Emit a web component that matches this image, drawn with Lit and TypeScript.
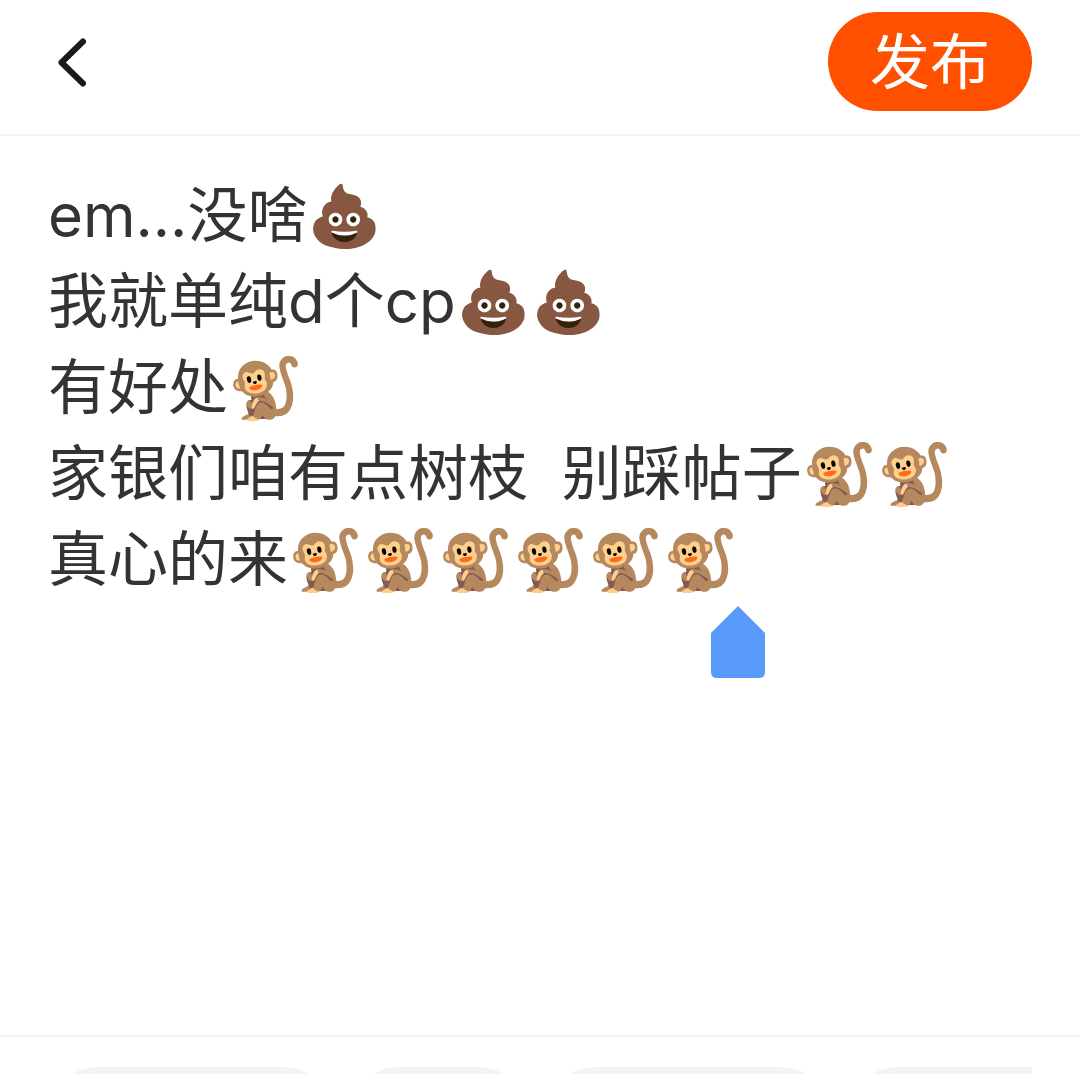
import { LitElement, html, css } from "lit";
import { customElement, state } from "lit/decorators.js";

@customElement("app-root")
export class AppRoot extends LitElement {
  static styles = css`
    :host {
      display: flex;
      flex-direction: column;
      height: 100vh;
      overflow: hidden;
      background: #fff;
      color: #333;
      font-family: Inter, "Noto Sans CJK SC", sans-serif;
    }
    .bar {
      display: flex;
      justify-content: space-between;
      align-items: center;
      padding: 12px 48px 23px;
      border-bottom: 2px solid #f3f3f3;
    }
    .back,
    .publish,
    .topic {
      border: 0;
      font: inherit;
      cursor: pointer;
    }
    .back {
      display: flex;
      padding: 0;
      background: none;
    }
    .publish {
      padding: 2px 42px 0;
      border-radius: 50px;
      background: #ff5000;
      color: #fff;
      font-size: 60px;
      line-height: 97px;
    }
    .body {
      position: relative;
      flex: 1;
      display: flex;
      min-height: 0;
    }
    .editor {
      flex: 1;
      box-sizing: border-box;
      padding: 36px 48px;
      border: 0;
      outline: 0;
      resize: none;
      background: none;
      color: inherit;
      font: inherit;
      font-size: 60px;
      line-height: 86px;
    }
    .handle {
      position: absolute;
      left: 711px;
      top: 470px;
    }
    .topics {
      height: 37px;
      padding: 0 48px;
      border-top: 2px solid #f5f5f5;
    }
    .strip {
      display: flex;
      gap: 18px;
      box-sizing: border-box;
      height: 100%;
      padding-top: 30px;
      overflow: hidden;
    }
    .topic {
      flex: none;
      width: 284px;
      height: 99px;
      padding: 0;
      border-radius: 50px;
      background: #f4f4f4;
    }
    .topic.short {
      width: 178px;
    }
  `;

  @state() private text =
    "em...没啥💩\n我就单纯d个cp💩💩\n有好处🐒\n家银们咱有点树枝  别踩帖子🐒🐒\n真心的来🐒🐒🐒🐒🐒🐒";

  private topics = ["long", "short", "long", "long"];

  render() {
    return html`
      <header class="bar">
        <button class="back" type="button" aria-label="返回">
          <svg width="48" height="60" viewBox="0 0 48 60" fill="none" stroke="#1a1a1a" stroke-width="6" stroke-linecap="round" stroke-linejoin="round">
            <path d="M35 9.5 13.5 30.5 35 51.5" />
          </svg>
        </button>
        <button class="publish" type="button">发布</button>
      </header>
      <main class="body">
        <textarea class="editor" aria-label="正文" .value=${this.text}></textarea>
        <svg class="handle" width="54" height="72" viewBox="0 0 54 72" aria-hidden="true">
          <path d="M27 0 54 27v39q0 6-6 6H6q-6 0-6-6V27Z" fill="#589bfb" />
        </svg>
      </main>
      <footer class="topics">
        <div class="strip">
          ${this.topics.map(
            (size, i) => html`<button class="topic ${size}" type="button" aria-label="话题 ${i + 1}"></button>`,
          )}
        </div>
      </footer>
    `;
  }
}
